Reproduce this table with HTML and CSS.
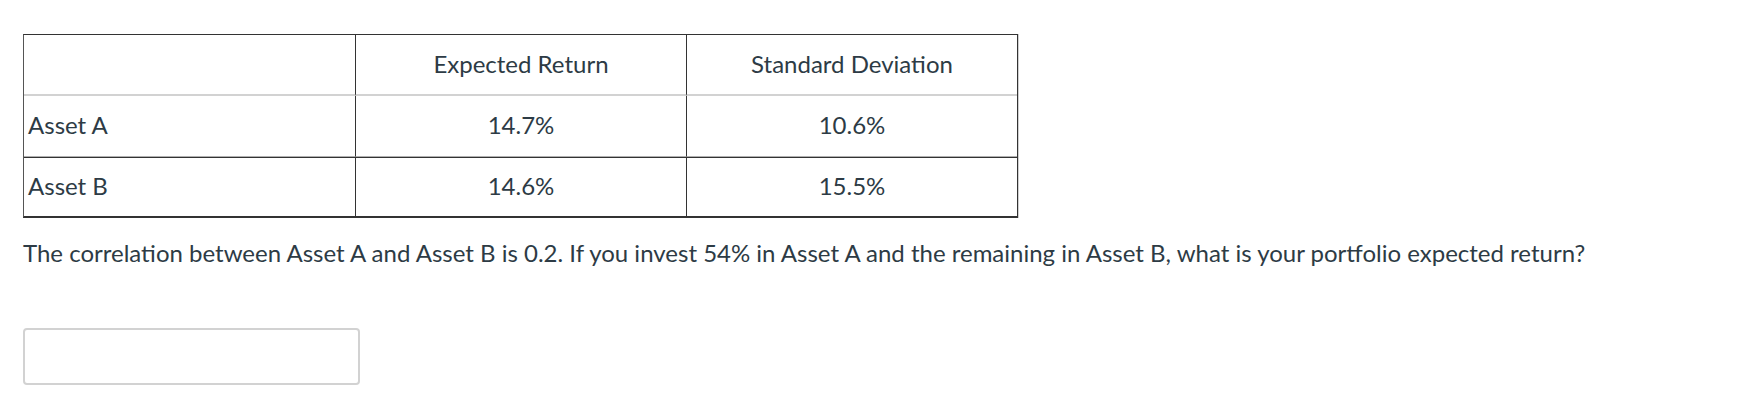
FILE: index.html
```html
<!DOCTYPE html>
<html lang="en">
<head>
<meta charset="utf-8">
<title>Question</title>
<link rel="stylesheet" href="styles.css">
</head>
<body>
<div class="question">
  <table class="data">
    <colgroup>
      <col class="c1"><col class="c2"><col class="c3">
    </colgroup>
    <thead>
      <tr>
        <th class="first"></th>
        <th>Expected Return</th>
        <th class="last">Standard Deviation</th>
      </tr>
    </thead>
    <tbody>
      <tr class="row-a">
        <td class="first label">Asset A</td>
        <td>14.7%</td>
        <td class="last">10.6%</td>
      </tr>
      <tr class="row-b">
        <td class="first label">Asset B</td>
        <td>14.6%</td>
        <td class="last">15.5%</td>
      </tr>
    </tbody>
  </table>
  <p class="text">The correlation between Asset A and Asset B is 0.2. If you invest 54% in Asset A and the remaining in Asset B, what is your portfolio expected return?</p>
  <input class="answer" type="text" aria-label="answer">
</div>
</body>
</html>
```
FILE: styles.css
```css
html, body {
  margin: 0;
  padding: 0;
  background: #ffffff;
}
body {
  font-family: Lato, "Open Sans", sans-serif;
  color: #2d3b45;
  font-size: 24px;
}
.question {
  padding: 34px 0 0 23px;
}
.data {
  border-collapse: separate;
  border-spacing: 0;
  table-layout: fixed;
  width: 993px;
  border-top: 1px solid #333;
  border-left: 1px solid #555;
  border-right: 1px solid #333;
  border-bottom: 2px solid #333;
  box-shadow: 1px 0 0 #d0d0d0;
}
.c1 { width: 332px; }
.c2 { width: 331px; }
.c3 { width: 330px; }
.data th, .data td {
  font-weight: 400;
  text-align: center;
  padding: 0 4px 3px 4px;
  border-right: 1px solid #333;
  vertical-align: middle;
}
.data .last { border-right: none; }
.data th {
  height: 56px;
  border-bottom: 2px solid #d2d2d2;
}
.row-a td {
  height: 57px;
  border-bottom: 1px solid #b0b0b0;
}
.row-b td {
  height: 55px;
  border-top: 1px solid #333;
}
.data .label { text-align: left; }
.text {
  margin: 18px 0 0 0;
  line-height: 33px;
}
.answer {
  display: block;
  margin-top: 59px;
  box-sizing: border-box;
  width: 337px;
  height: 57px;
  border: 2px solid #d2d2d2;
  border-radius: 4px;
  background: #fff;
  padding: 0 10px;
  font: inherit;
  outline: none;
}
```
